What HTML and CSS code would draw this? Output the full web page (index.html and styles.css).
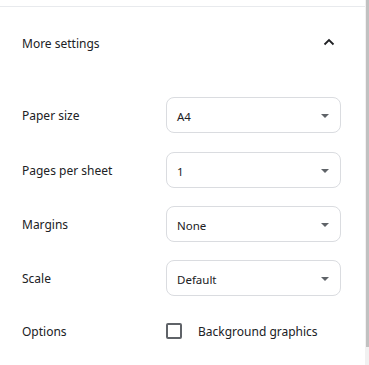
FILE: index.html
```html
<!DOCTYPE html>
<html>
<head>
  <title>Print settings</title>
  <link rel="stylesheet" href="styles.css">
</head>
<body>

<div class="page">
  <div class="panel">
    <div class="divider"></div>

    <!-- Section header -->
    <div class="section-header">
      <span>More settings</span>
      <svg class="chevron" width="12" height="8" viewBox="0 0 12 8">
        <path d="M1.5 6.5 L6 2 L10.5 6.5" fill="none" stroke="#202124" stroke-width="1.8"/>
      </svg>
    </div>

    <!-- Settings rows -->
    <div class="settings">
      <div class="row">
        <label class="row-label">Paper size</label>
        <div class="dropdown">
          <span>A4</span>
          <svg class="arrow" width="8" height="4" viewBox="0 0 8 4"><path d="M0 0 H8 L4 4 Z" fill="#5f6368"/></svg>
        </div>
      </div>
      <div class="row">
        <label class="row-label">Pages per sheet</label>
        <div class="dropdown">
          <span>1</span>
          <svg class="arrow" width="8" height="4" viewBox="0 0 8 4"><path d="M0 0 H8 L4 4 Z" fill="#5f6368"/></svg>
        </div>
      </div>
      <div class="row">
        <label class="row-label">Margins</label>
        <div class="dropdown">
          <span>None</span>
          <svg class="arrow" width="8" height="4" viewBox="0 0 8 4"><path d="M0 0 H8 L4 4 Z" fill="#5f6368"/></svg>
        </div>
      </div>
      <div class="row">
        <label class="row-label">Scale</label>
        <div class="dropdown">
          <span>Default</span>
          <svg class="arrow" width="8" height="4" viewBox="0 0 8 4"><path d="M0 0 H8 L4 4 Z" fill="#5f6368"/></svg>
        </div>
      </div>
      <div class="row row-options">
        <label class="row-label">Options</label>
        <div class="check">
          <span class="box"></span>
          <span>Background graphics</span>
        </div>
      </div>
    </div>
  </div>

  <!-- Scrollbar -->
  <div class="scrollbar">
    <div class="thumb"></div>
  </div>
</div>

</body>
</html>
```

FILE: styles.css
```css
body {
  margin: 0;
  font-family: "Noto Sans", "Open Sans", sans-serif;
  font-size: 12px;
  color: #202124;
  background: white;
}
.page {
  display: flex;
  height: 365px;
}
.panel {
  flex: 1;
}
.divider {
  margin-top: 6px;
  height: 1px;
  background: #e8eaed;
}
/* Header */
.section-header {
  height: 72px;
  display: flex;
  align-items: center;
  justify-content: space-between;
  padding: 0 30px 0 22px;
}
.chevron {
  margin-top: -2px;
}
/* Rows */
.settings {
  display: flex;
  flex-direction: column;
  gap: 18px;
  padding: 18px 0 0 22px;
}
.row {
  display: flex;
  align-items: center;
  height: 36px;
}
.row + .row {
  margin-top: 0;
}
.row:first-child {
  margin-bottom: 1px;
}
.row-options {
  height: 34px;
}
.row-label {
  width: 144px;
}
.dropdown {
  box-sizing: border-box;
  width: 175px;
  height: 36px;
  border: 1px solid #dadce0;
  border-radius: 8px;
  display: flex;
  align-items: center;
  justify-content: space-between;
  padding: 2px 11px 0 10px;
  font-size: 11.5px;
}
.check {
  display: flex;
  align-items: center;
}
.box {
  box-sizing: border-box;
  width: 16px;
  height: 16px;
  border: 2px solid #5f6368;
  border-radius: 2px;
  margin-right: 16px;
}
/* Fake scrollbar */
.scrollbar {
  width: 4px;
  background: #f1f1f1;
}
.thumb {
  margin-left: 1px;
  width: 3px;
  height: 347px;
  background: #c1c1c1;
}
```
